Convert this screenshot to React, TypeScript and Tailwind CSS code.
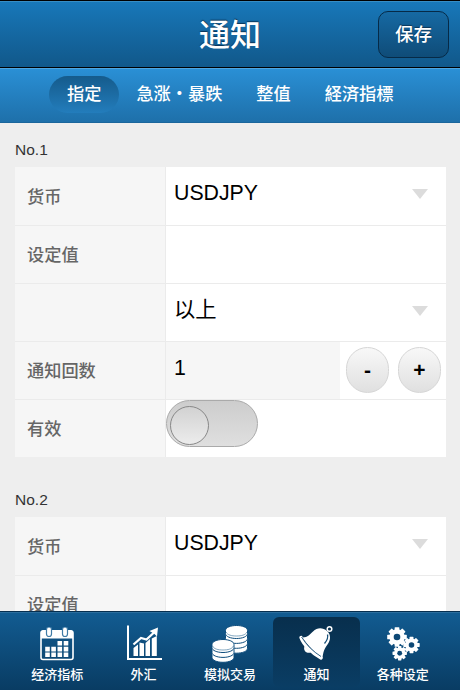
import type { ReactNode } from 'react';

const SelectArrow = () => (
  <svg width="16" height="10" viewBox="0 0 16 10" className="mt-[22px] mr-[18px]">
    <path d="M0 0H16L8 10Z" fill="#dcdcdc" />
  </svg>
);

const CalendarIcon = () => (
  <svg width="34" height="34" viewBox="0 0 34 34" fill="none">
    <rect x="1" y="4" width="32" height="28.500" rx="2" stroke="#fff" strokeWidth="1.6" />
    <path d="M1 5.500Q1 3 3 3H31Q33 3 33 5.500V11.500H1Z" fill="#fff" />
    {[9, 25].map((x) => (
      <rect key={x} x={x - 2.5} y="0" width="5" height="9.500" rx="2.500" fill="#fff" stroke="#3f7ba6" strokeWidth="1.200" />
    ))}
    <path d="M17.500 14h4.600v4.600h-4.600zM23.700 14h4.600v4.600h-4.600zM5.200 19.800h4.600v4.600H5.200zM11.300 19.800h4.600v4.600h-4.600zM17.500 19.800h4.600v4.600h-4.600zM23.700 19.800h4.600v4.600h-4.600zM5.200 25.400h4.600V30H5.200zM11.300 25.400h4.600V30h-4.600zM17.500 25.400h4.600V30h-4.600zM23.700 25.400h4.600V30h-4.600z" fill="#fff" />
  </svg>
);

const ChartIcon = () => (
  <svg width="36" height="36" viewBox="0 0 36 36" fill="none">
    <path d="M2 0.500V34H36" stroke="#fff" strokeWidth="2" />
    <path d="M7.500 23l4.500-3.500V31H7.500zM13.500 17.500l4.500 1v12.500h-4.500zM19.500 18l4.500-4v17h-4.500zM25.800 13.500l5-2.500v20h-5z" fill="#fff" />
    <path d="M7.500 19.500L15 13L20.500 14.500L28 7.500" stroke="#fff" strokeWidth="2.300" />
    <path d="M23.500 6L32 2.500L31 11.500L28.500 9Z" fill="#fff" />
  </svg>
);

const Coins = ({ x, y, layers }: { x: number; y: number; layers: number }) => (
  <g transform={`translate(${x} ${y})`}>
    {Array.from({ length: layers }, (_, i) => layers - i - 1).map((i) => (
      <path
        key={i}
        d="M0 5C0 2 5 0 11 0S22 2 22 5V8C22 11 17 13 11 13S0 11 0 8Z"
        transform={`translate(0 ${i * 4.9})`}
        fill="#fff"
        stroke="#0d4c7c"
        strokeWidth="1"
      />
    ))}
    <path d="M0.500 6.500C2 9.500 6 10.500 11 10.500S20 9.500 21.500 6.500" stroke="#4b7fa5" strokeWidth="0.700" fill="none" />
  </g>
);

const CoinsIcon = () => (
  <svg width="36" height="36" viewBox="0 0 36 36" className="overflow-visible">
    <Coins x={13.5} y={0.5} layers={4} />
    <Coins x={0} y={14.5} layers={3} />
  </svg>
);

const BellIcon = () => (
  <svg width="36" height="36" viewBox="0 0 36 36" fill="none">
    <path d="M4.500 12.500C10 12.500 12 9 15 6.500C19.500 2 25 2.500 29 6C33.500 10 32.500 15.500 29.500 19.500C26.500 23.500 25 27 24.500 33.500C18 29 10 21 4.500 12.500Z" fill="#fff" />
    <path d="M3 12.500C5.500 19.500 14 28.500 23 33" stroke="#fff" strokeWidth="3.400" strokeLinecap="round" />
    <path d="M3.500 12C8.500 20 15 26.500 23 31.500" stroke="#174f78" strokeWidth="0.900" />
    <path d="M6.500 21C5 25.500 8 29 13 27.500Z" fill="#fff" />
    <circle cx="31.500" cy="4" r="2.300" stroke="#fff" strokeWidth="1.500" />
    <path d="M29.500 9.500C30.500 13 29 15.500 26.500 18.500" stroke="#174f78" strokeWidth="1.300" />
  </svg>
);

const Gear = ({ cx, cy, r }: { cx: number; cy: number; r: number }) => (
  <g transform={`translate(${cx} ${cy})`}>
    {[0, 45, 90, 135].map((angle) => (
      <rect key={angle} x={-r * 0.24} y={-r} width={r * 0.48} height={r * 2} rx="0.600" fill="#fff" transform={`rotate(${angle})`} />
    ))}
    <circle r={r * 0.78} fill="#fff" />
    <circle r={r * 0.34} fill="#0d4875" />
  </g>
);

const GearsIcon = () => (
  <svg width="34" height="34" viewBox="0 0 34 34">
    <Gear cx={11} cy={10} r={9.8} />
    <Gear cx={25.5} cy={18} r={8.2} />
    <Gear cx={13.7} cy={26.2} r={7.2} />
  </svg>
);

const tabs = [
  { label: '指定', active: true },
  { label: '急涨・暴跌' },
  { label: '整值' },
  { label: '経済指標' },
];

const navItems = [
  { label: '经济指标', icon: <CalendarIcon /> },
  { label: '外汇', icon: <ChartIcon /> },
  { label: '模拟交易', icon: <CoinsIcon /> },
  { label: '通知', icon: <BellIcon />, active: true },
  { label: '各种设定', icon: <GearsIcon /> },
];

const Row = ({ label, children }: { label?: string; children?: ReactNode }) => (
  <div className="flex h-[58px] border-t border-[#ebebeb] first-of-type:border-t-0">
    <div className="flex w-[151px] shrink-0 items-center border-r border-[#ebebeb] bg-[#f6f6f6] pt-[3px] pl-[12px] text-[17.2px] font-medium text-[#666]">
      {label}
    </div>
    <div className="flex flex-1 justify-between bg-white">{children}</div>
  </div>
);

const Value = ({ children }: { children: ReactNode }) => (
  <span className="pt-[11px] pl-[8px] text-[21.3px] leading-[30px] text-black">{children}</span>
);

const RoundButton = ({ children }: { children: ReactNode }) => (
  <button className="flex h-[46px] w-[43px] items-center justify-center rounded-full border border-[#d6d6d6] bg-linear-to-b from-[#f8f8f8] to-[#e0e0e0] text-[21px] font-bold text-black">
    {children}
  </button>
);

const NotificationForm = ({ no }: { no: number }) => (
  <section className="mb-[16px]">
    <h2 className="h-[44px] pt-[15px] text-[15.5px] leading-[23px] text-[#333]">No.{no}</h2>
    <Row label="货币">
      <Value>USDJPY</Value>
      <SelectArrow />
    </Row>
    <Row label="设定值" />
    <Row>
      <Value>以上</Value>
      <SelectArrow />
    </Row>
    <Row label="通知回数">
      <div className="flex w-[174px] bg-[#f6f6f6]">
        <Value>1</Value>
      </div>
      <div className="flex flex-1 items-center justify-end gap-[9px] pr-[5px] pb-px">
        <RoundButton>-</RoundButton>
        <RoundButton>+</RoundButton>
      </div>
    </Row>
    <Row label="有效">
      <div className="flex h-[47px] w-[92px] items-center rounded-full border border-[#aaa] bg-linear-to-b from-[#cdcdcd] to-[#dfdfdf] pl-[3px]">
        <div className="mt-[3px] size-[39px] rounded-full border border-[#888] bg-linear-to-b from-[#d2d2d2] to-[#ececec]" />
      </div>
    </Row>
  </section>
);

export default function App() {
  return (
    <div className="flex h-[690px] w-[460px] flex-col overflow-hidden bg-[#eeeeee] font-['Liberation_Sans','Noto_Sans_CJK_SC',sans-serif]">
      {/* Header */}
      <header className="grid h-[68px] shrink-0 grid-cols-[82px_1fr_82px] items-center border-y border-black bg-linear-to-b from-[#1878ba] to-[#11588a] text-white inset-shadow-[0_1px_0_#368dc4]">
        <h1 className="col-start-2 pt-[3px] text-center text-[31px] leading-[40px] font-medium [text-shadow:0_-1px_1px_#0a3558]">通知</h1>
        <button className="h-[47px] w-[71px] rounded-[10px] border border-[#062a47] bg-linear-to-b from-[#1669a3] to-[#0f4c78] pt-px text-[18.5px] font-medium [text-shadow:0_-1px_1px_#0a3558]">
          保存
        </button>
      </header>

      {/* Tabs */}
      <nav className="flex h-[55px] shrink-0 items-start border-b border-[#1b669c] bg-linear-to-b from-[#2a90d6] to-[#1e70aa] pt-[8px] pl-[49px] text-[17.2px] font-medium text-white inset-shadow-[0_1px_0_#50a6df]">
        {tabs.map((tab) => (
          <button
            key={tab.label}
            className={
              tab.active
                ? 'h-[37px] rounded-full bg-linear-to-b from-[#155b8c] to-[#237dbc] px-[18px] pt-px'
                : 'h-[37px] px-[17px] pt-px'
            }
          >
            {tab.label}
          </button>
        ))}
      </nav>

      <main className="min-h-0 flex-1 overflow-hidden pr-[14px] pl-[15px]">
        <NotificationForm no={1} />
        <NotificationForm no={2} />
      </main>

      {/* Bottom navigation */}
      <footer className="flex h-[79px] shrink-0 border-t border-[#062f50] bg-linear-to-b from-[#125c92] to-[#093c63] px-[14px] pt-[5px] text-white inset-shadow-[0_1px_0_#2b6e9e]">
        {navItems.map((item) => (
          <button
            key={item.label}
            className={
              item.active
                ? 'flex h-[70px] flex-1 flex-col items-center rounded-[6px] bg-linear-to-b from-[#082f4d] to-[#0a3d64]'
                : 'flex h-[70px] flex-1 flex-col items-center'
            }
          >
            <span className="flex h-[46px] items-end pb-[2px]">{item.icon}</span>
            <span className="text-[13px] leading-[23px] font-medium whitespace-nowrap">{item.label}</span>
          </button>
        ))}
      </footer>
    </div>
  );
}
